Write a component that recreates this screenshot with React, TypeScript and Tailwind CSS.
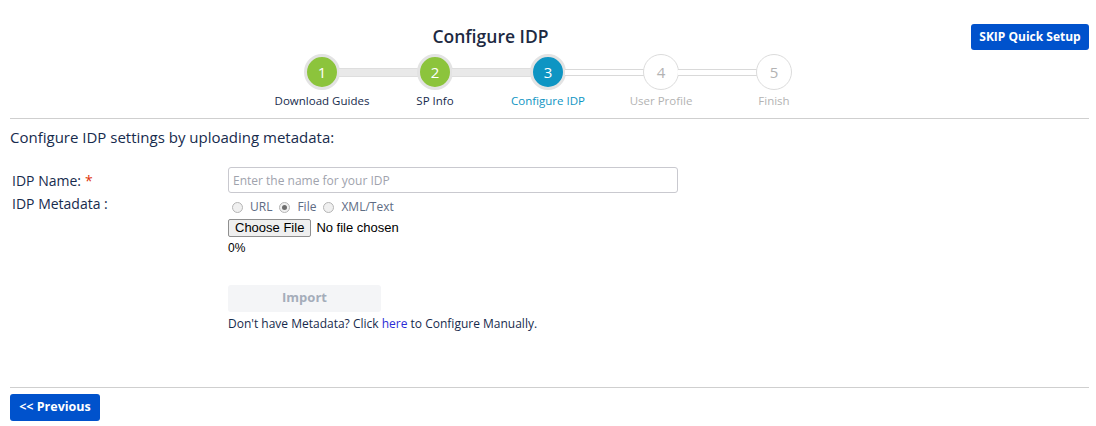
import React from "react";

const font = { fontFamily: '"Open Sans", "Noto Sans", sans-serif' };
const arial = { fontFamily: '"Liberation Sans", Arial, sans-serif' };

type Step = { n: number; label: string; state: "done" | "active" | "todo" };

const steps: Step[] = [
  { n: 1, label: "Download Guides", state: "done" },
  { n: 2, label: "SP Info", state: "done" },
  { n: 3, label: "Configure IDP", state: "active" },
  { n: 4, label: "User Profile", state: "todo" },
  { n: 5, label: "Finish", state: "todo" },
];

function Circle({ step }: { step: Step }) {
  const cls =
    step.state === "done"
      ? "bg-[#8cc43c] text-white border-[3px] border-[#e3e3e3]"
      : step.state === "active"
        ? "bg-[#0e95c3] text-white border-[3px] border-[#e3e3e3]"
        : "bg-white text-[#b3b3b3] border border-[#dcdcdc]";
  return (
    <div
      className={`flex h-[36px] w-[36px] shrink-0 items-center justify-center rounded-full text-[15px] ${cls}`}
    >
      {step.n}
    </div>
  );
}

function Connector({ done }: { done: boolean }) {
  return done ? (
    <div className="-mx-[1px] h-[9px] w-[79px] border-y border-[#dedede] bg-[#e9e9e9]" />
  ) : (
    <div className="-mx-[1px] h-[7px] w-[79px] border-y border-[#d9d9d9] bg-white" />
  );
}

function Stepper() {
  return (
    <div className="flex flex-col items-center">
      <div className="flex items-center">
        {steps.map((s, i) => (
          <React.Fragment key={s.n}>
            <Circle step={s} />
            {i < steps.length - 1 && <Connector done={i < 2} />}
          </React.Fragment>
        ))}
      </div>
      <div className="mt-[3px] flex">
        {steps.map((s) => (
          <div
            key={s.n}
            className={`w-[113px] text-center text-[11.5px] leading-[16px] ${
              s.state === "done"
                ? "text-[#172b4d]"
                : s.state === "active"
                  ? "text-[#0e95c3]"
                  : "text-[#b3b3b3]"
            }`}
          >
            {s.label}
          </div>
        ))}
      </div>
    </div>
  );
}

function Radio({ checked, label }: { checked?: boolean; label: string }) {
  return (
    <span className="flex items-center gap-[7px]">
      <span className="flex h-[11px] w-[11px] items-center justify-center rounded-full border border-[#b5b5b5] bg-[#f0f0f0]">
        {checked && <span className="h-[5px] w-[5px] rounded-full bg-[#6d6d6d]" />}
      </span>
      <span>{label}</span>
    </span>
  );
}

export default function App() {
  return (
    <div className="h-[426px] w-[1096px] bg-white pl-[10px] pr-[7px] text-[#172b4d]" style={font}>
      <div className="flex items-start pt-[24px]">
        <div className="flex-1 text-center text-[17.5px] font-semibold leading-[24px] text-[#1d2942]">
          Configure IDP
        </div>
        <button className="h-[26px] w-[118px] rounded-[3px] bg-[#0052cc] text-[12px] font-bold text-white">
          SKIP Quick Setup
        </button>
      </div>
      <div className="mt-[4px] pr-[3px]">
        <Stepper />
      </div>
      <div className="mt-[9px] border-t border-[#cfcfcf]" />
      <div className="mt-[7px] text-[15px] leading-[22px]">
        Configure IDP settings by uploading metadata:
      </div>
      <div className="mt-[19px] flex">
        <div className="w-[218px] pl-[2px] text-[14px]">
          <div className="flex h-[26px] items-center">
            IDP Name:<span className="ml-[4px] text-[#de350b]">*</span>
          </div>
          <div className="mt-[2px] flex h-[16px] items-center">IDP Metadata :</div>
        </div>
        <div className="flex flex-col">
          <input
            className="h-[26px] w-[450px] rounded-[3px] border border-[#c9c9cf] px-[4px] text-[12px] outline-none placeholder:text-[#a0a3ad]"
            placeholder="Enter the name for your IDP"
            style={font}
          />
          <div className="mt-[6px] flex h-[16px] items-center gap-[7px] pl-[4px] text-[12px] text-[#5e6c84]">
            <Radio label="URL" />
            <Radio checked label="File" />
            <Radio label="XML/Text" />
          </div>
          <div className="mt-[3px] flex items-center text-[13px] text-black" style={arial}>
            <span className="flex h-[18px] items-center rounded-[2px] border border-[#8f8f8f] bg-[#efefef] px-[6px]">
              Choose File
            </span>
            <span className="ml-[5px]">No file chosen</span>
          </div>
          <div className="mt-[2px] text-[12px] leading-[16px] text-black" style={arial}>
            0%
          </div>
          <button className="mt-[29px] h-[27px] w-[153px] rounded-[3px] bg-[#f4f5f7] text-[13px] font-bold text-[#a5adba]">
            Import
          </button>
          <div className="mt-[3px] text-[12px] leading-[18px]">
            Don't have Metadata? Click <span className="text-[#2b2bd6]">here</span> to Configure Manually.
          </div>
        </div>
      </div>
      <div className="mt-[54px] border-t border-[#cfcfcf]" />
      <button className="mt-[6px] h-[27px] w-[90px] rounded-[3px] bg-[#0052cc] text-[12.5px] font-bold text-white">
        &lt;&lt; Previous
      </button>
    </div>
  );
}
